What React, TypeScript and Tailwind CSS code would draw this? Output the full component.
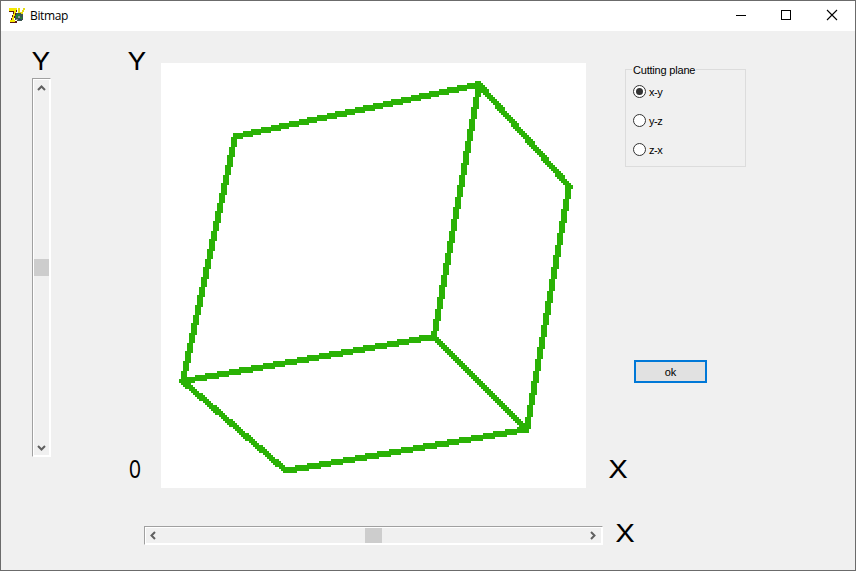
import React from "react";

type Point = [number, number];

const GRID = 213;
const A: Point = [36.6, 36.3];
const B: Point = [158.6, 10.2];
const C: Point = [203.6, 61.2];
const D: Point = [10.4, 158.6];
const E: Point = [136, 136.3];
const F: Point = [182.4, 182.7];
const G: Point = [62, 203.4];

const EDGES: [Point, Point][] = [
  [A, B], [B, C], [C, F], [F, G], [G, D], [D, A], [D, E], [E, B], [E, F],
];

function covers(x: number, y: number, [p, q]: [Point, Point]) {
  const dx = q[0] - p[0];
  const dy = q[1] - p[1];
  const t = Math.max(0, Math.min(1, ((x - p[0]) * dx + (y - p[1]) * dy) / (dx * dx + dy * dy)));
  return Math.hypot(x - p[0] - t * dx, y - p[1] - t * dy) <= 1.52;
}

// Rasterises the wireframe on a coarse grid, one rectangle per horizontal run.
function rasterise() {
  let d = "";
  for (let y = 0; y < GRID; y++) {
    let start = -1;
    for (let x = 0; x <= GRID; x++) {
      const on = x < GRID && EDGES.some((e) => covers(x, y, e));
      if (on && start < 0) start = x;
      if (!on && start >= 0) {
        d += `M${start * 2} ${y * 2}h${(x - start) * 2}v2h${(start - x) * 2}z`;
        start = -1;
      }
    }
  }
  return d;
}

const WIREFRAME = rasterise();

function AxisLabel({ children, className = "" }: { children: string; className?: string }) {
  return (
    <div className={`flex h-5 w-5 shrink-0 items-center justify-center font-['Inter',sans-serif] text-[24px] leading-5 text-black ${className}`}>
      {children}
    </div>
  );
}

function Chevron({ className = "" }: { className?: string }) {
  return (
    <svg className={`shrink-0 ${className}`} width="9" height="9" viewBox="0 0 9 9" fill="none" stroke="#606060" strokeWidth="2">
      <path d="M1 6 4.5 2.5 8 6" />
    </svg>
  );
}

function AppIcon() {
  return (
    <svg width="16" height="16" viewBox="0 0 16 16" shapeRendering="crispEdges">
      <path d="M0 1h8v3H7v3H6v3H5v3h3v2H1v-2h1v-3h1V7h1V4H0z" fill="#5b1a14" />
      <path d="M0 0h8v2H7v3H6v3H5v4H3V9h1V6h1V3H0z" fill="#f5e900" />
      <path d="M1 12h5v2H1z" fill="#f5e900" />
      <path d="M9 0h2v4h2V2h1V0h2v2h-1v2h-1v3h-3V5H9z" fill="#e5dc12" />
      <path d="M7 5h5v1h2v6h-1v1H8v-1H6V7h1z" fill="#3a554e" />
      <path d="M8 6h3v2H9v2H7V7h1zM11 9h2v2h-2z" fill="#23803a" />
      <path d="M9 8h2v2H9zM7 11h2v1H7z" fill="#8a969e" />
      <path d="M10 11h2v1h-2z" fill="#173e8a" />
    </svg>
  );
}

function Radio({ label, checked = false }: { label: string; checked?: boolean }) {
  return (
    <div className="flex h-[13px] items-center">
      <span className="flex size-[13px] items-center justify-center rounded-full border border-[#333333] bg-white">
        {checked && <span className="size-[7px] rounded-full bg-[#333333]" />}
      </span>
      <span className="mt-px ml-[3px] text-[11px] leading-[13px] tracking-[-0.4px]">{label}</span>
    </div>
  );
}

export default function App() {
  return (
    <div className="flex h-[571px] w-[856px] flex-col overflow-hidden border border-[#6b6b6b] bg-[#f0f0f0] font-['Liberation_Sans',Arial,sans-serif] text-black">
      <header className="flex h-[30px] shrink-0 items-center bg-white pl-2">
        <AppIcon />
        <span className="ml-[5px] font-['Open_Sans',sans-serif] text-[12px] leading-4 tracking-[-0.35px]">Bitmap</span>
        <svg className="ml-auto" width="120" height="30" viewBox="0 0 120 30" fill="none" stroke="#000">
          <path d="M1 14.5h10M46.5 9.5h9v9h-9z" shapeRendering="crispEdges" />
          <path d="m92 9 10 10m0-10L92 19" strokeWidth="1.1" />
        </svg>
      </header>

      <main className="flex h-[457px] shrink-0">
        <div className="ml-[31px] w-[19px] shrink-0 pt-[21px]">
          <AxisLabel className="-ml-px scale-x-[1.15]">Y</AxisLabel>
          <div className="mt-[6px] flex h-[379px] w-[19px] flex-col items-center border border-t-[#a0a0a0] border-r-white border-b-white border-l-[#a0a0a0]">
            <div className="flex h-[377px] w-[17px] flex-col items-center border border-white">
              <Chevron className="mt-1" />
              <div className="mt-[166px] h-[17px] w-[15px] bg-[#cdcdcd]" />
              <Chevron className="mt-auto mb-[3px] rotate-180" />
            </div>
          </div>
        </div>

        <div className="ml-[76px] flex w-[34px] shrink-0 flex-col justify-between pt-[21px] pb-2">
          <AxisLabel className="scale-x-[1.15]">Y</AxisLabel>
          <AxisLabel className="-ml-[2px] scale-x-[0.82]">0</AxisLabel>
        </div>

        <div className="mt-8 h-[425px] w-[425px] shrink-0 bg-white">
          <svg width="425" height="425" viewBox="0 0 425 425" shapeRendering="crispEdges">
            <path d={WIREFRAME} fill="#2ab205" />
          </svg>
        </div>

        <div className="flex w-[200px] shrink-0 flex-col items-start pt-8 pb-2">
          <fieldset className="ml-[39px] h-[104px] w-[121px] border border-[#dcdcdc] pl-[7px]">
            <legend className="relative top-px -ml-px px-px text-[11px] leading-[13px] tracking-[-0.2px]">Cutting plane</legend>
            <div className="flex flex-col gap-4 pt-[9px]">
              <Radio label="x-y" checked />
              <Radio label="y-z" />
              <Radio label="z-x" />
            </div>
          </fieldset>
          <button className="mt-[193px] ml-12 h-[23px] w-[73px] border-2 border-[#0078d7] bg-[#e1e1e1] pt-px text-[11px] leading-[18px]">ok</button>
          <AxisLabel className="mt-auto ml-[22px] scale-x-[1.2]">X</AxisLabel>
        </div>
      </main>

      <footer className="mt-[37px] ml-[143px] flex items-start">
        <div className="mt-px h-[19px] w-[459px] border border-t-[#a0a0a0] border-r-white border-b-white border-l-[#a0a0a0]">
          <div className="flex h-[17px] w-[457px] items-center border border-white">
            <Chevron className="ml-[3px] -rotate-90" />
            <div className="ml-[207px] h-[15px] w-[17px] bg-[#cdcdcd]" />
            <Chevron className="mr-1 ml-auto rotate-90" />
          </div>
        </div>
        <AxisLabel className="-mt-px ml-3 scale-x-[1.2]">X</AxisLabel>
      </footer>
    </div>
  );
}
